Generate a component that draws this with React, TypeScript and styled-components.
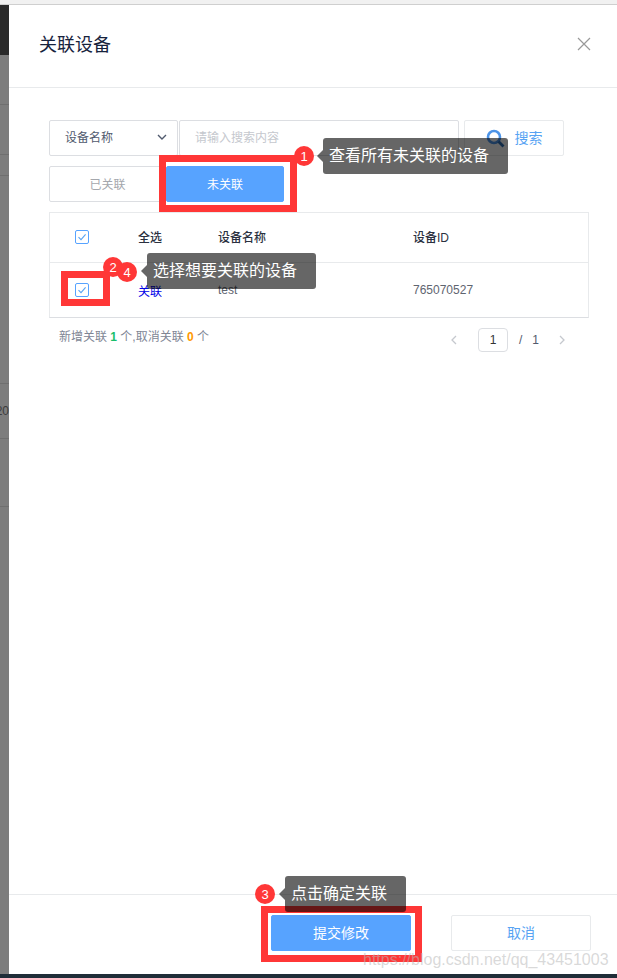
import styled, { createGlobalStyle } from "styled-components";

const GlobalStyle = createGlobalStyle`
  html, body {
    margin: 0;
    padding: 0;
    background: #fff;
  }
  body {
    font-family: "Liberation Sans", "Noto Sans CJK SC", sans-serif;
  }
`;

const Page = styled.div`
  position: relative;
  width: 617px;
  height: 978px;
  overflow: hidden;
  display: flex;
  flex-direction: column;
`;

const TopStrip = styled.div`
  height: 4px;
  background: #f1f1f1;
  border-bottom: 1px solid #cfcfcf;
`;

const Middle = styled.div`
  flex: 1;
  display: flex;
  min-height: 0;
`;

const BottomStrip = styled.div`
  height: 4px;
  background: #1f2d38;
`;

const Backdrop = styled.div`
  width: 9px;
  display: flex;
  flex-direction: column;
  overflow: hidden;
  background: #7d7d7d;
`;

const BackdropBar = styled.div`
  height: 50px;
  background: #2a2a2a;
`;

const BackdropRow = styled.div<{ $height: number; $last?: boolean }>`
  height: ${(p) => p.$height}px;
  flex: ${(p) => (p.$last ? 1 : "none")};
  box-sizing: border-box;
  border-bottom: ${(p) => (p.$last ? "none" : "1px solid #6f6f6f")};
  display: flex;
  align-items: center;
  justify-content: flex-end;
  font-size: 12px;
  color: #3c3c3c;
  overflow: hidden;
  white-space: nowrap;
`;

const Modal = styled.div`
  flex: 1;
  display: flex;
  flex-direction: column;
  background: #fff;
  min-width: 0;
`;

const Header = styled.div`
  height: 83px;
  box-sizing: border-box;
  border-bottom: 1px solid #e8eaec;
  padding: 0 26px 4px 30px;
  display: flex;
  align-items: center;
  justify-content: space-between;
`;

const Title = styled.div`
  font-size: 18px;
  color: #17233d;
  padding-bottom: 2px;
`;

const CloseIcon = styled.svg`
  width: 14px;
  height: 14px;
  stroke: #999;
  stroke-width: 1.2;
  fill: none;
`;

const Body = styled.div`
  flex: 1;
  padding: 32px 28px 0 40px;
  min-height: 0;
`;

const SearchRow = styled.div`
  display: flex;
  height: 36px;
`;

const Select = styled.div`
  width: 129px;
  box-sizing: border-box;
  border: 1px solid #dcdee2;
  border-radius: 2px;
  padding: 0 9px 3px 15px;
  display: flex;
  align-items: center;
  justify-content: space-between;
  font-size: 12px;
  color: #515a6e;
`;

const Chevron = styled.svg`
  width: 12px;
  height: 12px;
  stroke: #515a6e;
  stroke-width: 1.4;
  fill: none;
`;

const SearchInput = styled.div`
  width: 280px;
  margin-left: 1px;
  box-sizing: border-box;
  border: 1px solid #dcdee2;
  border-radius: 2px;
  padding: 0 0 3px 15px;
  display: flex;
  align-items: center;
  font-size: 12px;
  color: #c5c8ce;
`;

const SearchButton = styled.div`
  width: 100px;
  margin-left: 5px;
  box-sizing: border-box;
  border: 1px solid #e8eaec;
  border-radius: 2px;
  display: flex;
  align-items: center;
  justify-content: center;
  gap: 10px;
  font-size: 14px;
  color: #57a3f3;
`;

const SearchLabel = styled.span`
  padding-bottom: 3px;
`;

const SearchIcon = styled.svg`
  width: 19px;
  height: 19px;
  fill: none;
`;

const ToggleRow = styled.div`
  display: flex;
  margin-top: 10px;
  height: 36px;
`;

const Toggle = styled.div<{ $active?: boolean }>`
  width: ${(p) => (p.$active ? 118 : 117)}px;
  box-sizing: border-box;
  border: 1px solid ${(p) => (p.$active ? "#57a3ff" : "#dcdee2")};
  border-radius: 2px;
  background: ${(p) => (p.$active ? "#57a3ff" : "#fff")};
  color: ${(p) => (p.$active ? "#fff" : "#a4a7ad")};
  display: flex;
  align-items: center;
  justify-content: center;
  font-size: 12px;
  padding-bottom: 2px;
`;

const Table = styled.div`
  margin-top: 10px;
  box-sizing: border-box;
  border: 1px solid #e8eaec;
  border-bottom-color: #dcdee2;
`;

const TableRow = styled.div<{ $head?: boolean }>`
  display: grid;
  grid-template-columns: 88px 80px 195px 1fr;
  align-items: center;
  box-sizing: border-box;
  height: ${(p) => (p.$head ? 50 : 54)}px;
  padding-bottom: ${(p) => (p.$head ? 2 : 0)}px;
  border-bottom: ${(p) => (p.$head ? "1px solid #e8eaec" : "none")};
  font-size: 12px;
  font-weight: ${(p) => (p.$head ? 500 : 400)};
  color: ${(p) => (p.$head ? "#2b3140" : "#5f6570")};
`;

const CheckCell = styled.div`
  padding-left: 25px;
  display: flex;
`;

const CheckBox = styled.svg`
  width: 14px;
  height: 14px;
  fill: none;
`;

const LinkText = styled.span`
  color: #0000e6;
`;

const FooterInfo = styled.div`
  display: flex;
  justify-content: space-between;
  align-items: flex-start;
  padding: 10px 22px 0 10px;
`;

const Summary = styled.div`
  font-size: 12px;
  color: #808695;
  line-height: 18px;
`;

const Count = styled.b<{ $color: string }>`
  color: ${(p) => p.$color};
`;

const Pager = styled.div`
  display: flex;
  align-items: center;
  height: 24px;
  font-size: 12px;
  color: #515a6e;
`;

const PagerArrow = styled.svg`
  width: 10px;
  height: 10px;
  stroke: #c5c8ce;
  stroke-width: 1.3;
  fill: none;
`;

const PageBox = styled.div`
  width: 30px;
  height: 24px;
  margin: 0 11px 0 19px;
  box-sizing: border-box;
  border: 1px solid #dcdee2;
  border-radius: 4px;
  display: flex;
  align-items: center;
  justify-content: center;
  color: #333;
`;

const PageTotal = styled.span`
  margin: 0 18px 0 10px;
`;

const Footer = styled.div`
  height: 80px;
  box-sizing: border-box;
  border-top: 1px solid #e8eaec;
  padding: 20px 26px 0 0;
  display: flex;
  justify-content: flex-end;
  gap: 40px;
`;

const FooterButton = styled.div<{ $primary?: boolean }>`
  width: 140px;
  height: 36px;
  box-sizing: border-box;
  border: 1px solid ${(p) => (p.$primary ? "#57a3ff" : "#e8eaec")};
  border-radius: 2px;
  background: ${(p) => (p.$primary ? "#57a3ff" : "#fff")};
  color: ${(p) => (p.$primary ? "#fff" : "#57a3f3")};
  display: flex;
  align-items: center;
  justify-content: center;
  font-size: 14px;
  padding-bottom: 2px;
`;

/* annotations drawn on top of the screenshot */
const RedFrame = styled.div<{ $x: number; $y: number; $w: number; $h: number }>`
  position: absolute;
  left: ${(p) => p.$x}px;
  top: ${(p) => p.$y}px;
  width: ${(p) => p.$w}px;
  height: ${(p) => p.$h}px;
  box-sizing: border-box;
  border: 7px solid #ff3737;
`;

const Badge = styled.div<{ $x: number; $y: number }>`
  position: absolute;
  left: ${(p) => p.$x}px;
  top: ${(p) => p.$y}px;
  width: 20px;
  height: 20px;
  border-radius: 50%;
  background: #ff3737;
  color: #fff;
  font-size: 13px;
  display: flex;
  align-items: center;
  justify-content: center;
`;

const Tip = styled.div<{ $x: number; $y: number }>`
  position: absolute;
  left: ${(p) => p.$x}px;
  top: ${(p) => p.$y}px;
  height: 36px;
  box-sizing: border-box;
  padding: 0 19px 0 6px;
  border-radius: 3px;
  background: rgba(0, 0, 0, 0.6);
  color: #fff;
  font-size: 16px;
  line-height: 36px;
  white-space: nowrap;

  &::before {
    content: "";
    position: absolute;
    left: -6px;
    top: 12px;
    border-style: solid;
    border-width: 6px 6px 6px 0;
    border-color: transparent rgba(0, 0, 0, 0.6) transparent transparent;
  }
`;

const Watermark = styled.div`
  position: absolute;
  left: 363px;
  top: 950px;
  font-size: 16px;
  line-height: 20px;
  color: rgba(185, 185, 185, 0.55);
  white-space: nowrap;
`;

const Check = () => (
  <CheckBox viewBox="0 0 14 14">
    <rect x="0.5" y="0.5" width="13" height="13" rx="1.5" stroke="#57a3ff" />
    <path d="M3.5 7.2 L6 9.6 L10.6 4.4" stroke="#57a3f3" strokeWidth="1.1" />
  </CheckBox>
);

export default function App() {
  return (
    <Page>
      <GlobalStyle />
      <TopStrip />
      <Middle>
        <Backdrop>
          <BackdropBar />
          <BackdropRow $height={50} />
          <BackdropRow $height={50} />
          <BackdropRow $height={21} />
          <BackdropRow $height={208} />
          <BackdropRow $height={55}>20</BackdropRow>
          <BackdropRow $height={68} />
          <BackdropRow $height={0} $last />
        </Backdrop>
        <Modal>
          <Header>
            <Title>关联设备</Title>
            <CloseIcon viewBox="0 0 14 14">
              <path d="M1 1 L13 13 M13 1 L1 13" />
            </CloseIcon>
          </Header>
          <Body>
            <SearchRow>
              <Select>
                设备名称
                <Chevron viewBox="0 0 12 12">
                  <path d="M2 4 L6 8 L10 4" />
                </Chevron>
              </Select>
              <SearchInput>请输入搜索内容</SearchInput>
              <SearchButton>
                <SearchIcon viewBox="0 0 19 19">
                  <circle cx="8" cy="8" r="6" stroke="#4d94e8" strokeWidth="2.6" />
                  <path d="M12.5 12.5 L17.5 17.5" stroke="#2f6fb5" strokeWidth="2.8" />
                </SearchIcon>
                <SearchLabel>搜索</SearchLabel>
              </SearchButton>
            </SearchRow>
            <ToggleRow>
              <Toggle>已关联</Toggle>
              <Toggle $active>未关联</Toggle>
            </ToggleRow>
            <Table>
              <TableRow $head>
                <CheckCell>
                  <Check />
                </CheckCell>
                <span>全选</span>
                <span>设备名称</span>
                <span>设备ID</span>
              </TableRow>
              <TableRow>
                <CheckCell>
                  <Check />
                </CheckCell>
                <LinkText>关联</LinkText>
                <span>test</span>
                <span>765070527</span>
              </TableRow>
            </Table>
            <FooterInfo>
              <Summary>
                新增关联 <Count $color="#19be6b">1</Count> 个,取消关联{" "}
                <Count $color="#ff9900">0</Count> 个
              </Summary>
              <Pager>
                <PagerArrow viewBox="0 0 10 10">
                  <path d="M7 1 L3 5 L7 9" />
                </PagerArrow>
                <PageBox>1</PageBox>/<PageTotal>1</PageTotal>
                <PagerArrow viewBox="0 0 10 10">
                  <path d="M3 1 L7 5 L3 9" />
                </PagerArrow>
              </Pager>
            </FooterInfo>
          </Body>
          <Footer>
            <FooterButton $primary>提交修改</FooterButton>
            <FooterButton>取消</FooterButton>
          </Footer>
        </Modal>
      </Middle>
      <BottomStrip />

      <RedFrame $x={159} $y={155} $w={138} $h={57} />
      <RedFrame $x={61} $y={271} $w={49} $h={35} />
      <RedFrame $x={261} $y={906} $w={161} $h={56} />

      <Badge $x={294} $y={146}>1</Badge>
      <Tip $x={323} $y={138}>查看所有未关联的设备</Tip>
      <Badge $x={103} $y={257}>2</Badge>
      <Badge $x={117} $y={262}>4</Badge>
      <Tip $x={147} $y={253}>选择想要关联的设备</Tip>
      <Badge $x={255} $y={884}>3</Badge>
      <Tip $x={285} $y={876}>点击确定关联</Tip>

      <Watermark>https://blog.csdn.net/qq_43451003</Watermark>
    </Page>
  );
}
